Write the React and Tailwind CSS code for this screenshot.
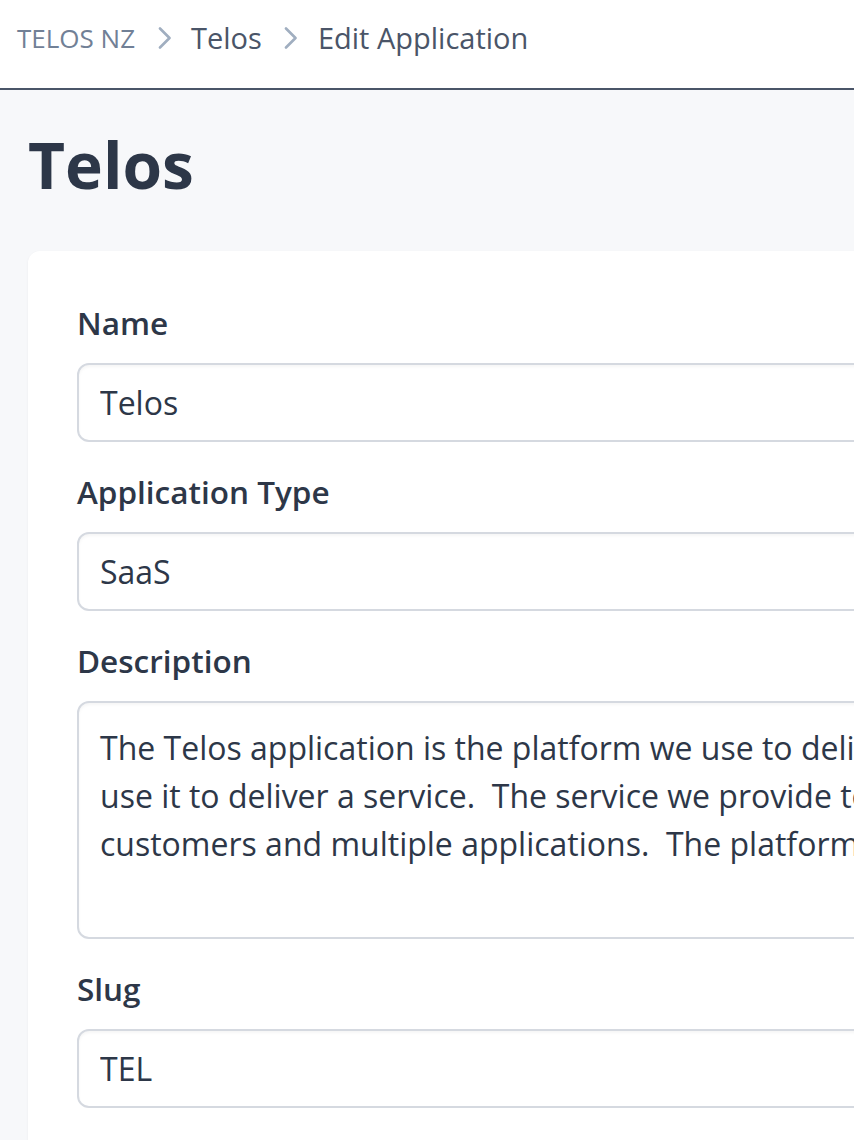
import React from "react";

const description = [
  "The Telos application is the platform we use to deliver value to our customers.  We",
  "use it to deliver a service.  The service we provide to our customers is delivered to",
  "customers and multiple applications.  The platform supports many teams at once.",
  "",
].join("\n");

function Chevron() {
  return (
    <svg width="14" height="22" viewBox="0 0 14 22" fill="none" className="shrink-0">
      <path d="M2 1.5 L11.5 11 L2 20.5" stroke="#a0aec0" strokeWidth="2.6" strokeLinecap="round" strokeLinejoin="round" />
    </svg>
  );
}

function Field({ label, children }) {
  return (
    <div className="mb-[30px]">
      <label className="mb-[20px] block text-[31.5px] font-semibold leading-[40px] text-[#2d3748]">{label}</label>
      {children}
    </div>
  );
}

function TextInput({ value }) {
  return (
    <input
      readOnly
      value={value}
      className="block h-[79px] w-full rounded-[12px] border-2 border-[#d5d9e0] bg-white px-[21px] text-[32px] text-[#2d3748] shadow-[inset_0_2px_3px_rgba(0,0,0,0.04)] outline-none"
    />
  );
}

export default function App() {
  return (
    <div className="h-[1140px] w-full overflow-hidden bg-[#f7f8fa] font-['Open_Sans',sans-serif]">
      <header className="flex h-[90px] items-center border-b-2 border-[#4a5568] bg-white pb-[12px] pl-[17px]">
        <span className="text-[26px] uppercase text-[#718096]">Telos NZ</span>
        <span className="ml-[23px] mr-[19px]"><Chevron /></span>
        <span className="text-[29px] text-[#4a5568]">Telos</span>
        <span className="ml-[22px] mr-[20px]"><Chevron /></span>
        <span className="text-[29px] text-[#4a5568]">Edit Application</span>
      </header>

      <main className="pl-[28px]">
        <h1 className="mt-[35px] text-[64px] font-bold leading-[80px] text-[#2d3748]">Telos</h1>

        <section className="mt-[46px] w-[1500px] rounded-[12px] bg-white pl-[49px] pr-[49px] pt-[52px] pb-[200px] shadow-[0_1px_3px_rgba(0,0,0,0.05)]">
          <Field label="Name">
            <TextInput value="Telos" />
          </Field>
          <Field label="Application Type">
            <TextInput value="SaaS" />
          </Field>
          <Field label="Description">
            <textarea
              readOnly
              wrap="off"
              value={description}
              className="block h-[238px] w-full resize-none overflow-hidden rounded-[12px] border-2 border-[#d5d9e0] bg-white px-[21px] pt-[21px] text-[32px] leading-[48px] text-[#2d3748] shadow-[inset_0_2px_3px_rgba(0,0,0,0.04)] outline-none"
            />
          </Field>
          <Field label="Slug">
            <TextInput value="TEL" />
          </Field>
        </section>
      </main>
    </div>
  );
}
